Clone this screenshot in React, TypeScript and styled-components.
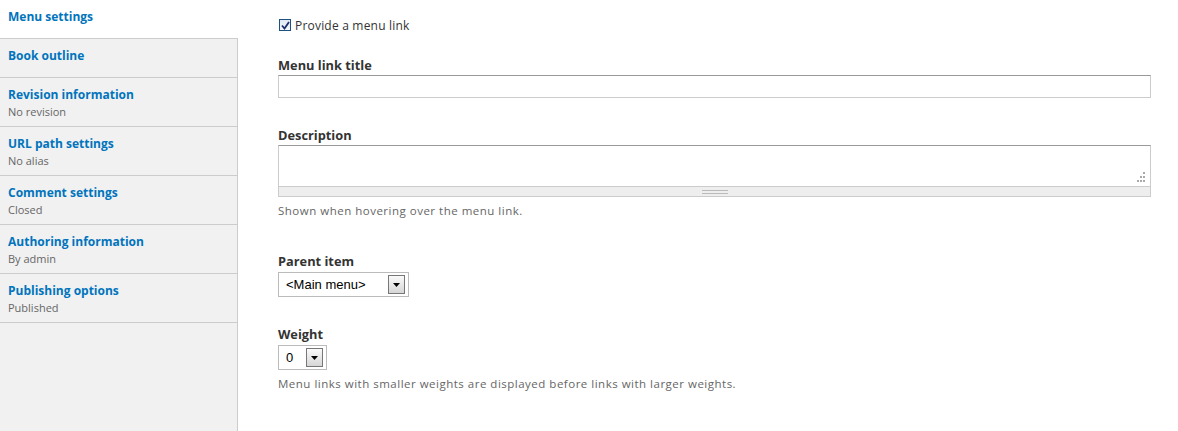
import React from 'react';
import styled, { createGlobalStyle } from 'styled-components';

const GlobalStyle = createGlobalStyle`
  html, body {
    margin: 0;
    padding: 0;
    background: #fff;
  }
  body {
    font-family: "Open Sans", "DejaVu Sans", sans-serif;
    color: #333;
  }
`;

const tabs = [
  { title: 'Menu settings', active: true },
  { title: 'Book outline' },
  { title: 'Revision information', summary: 'No revision' },
  { title: 'URL path settings', summary: 'No alias' },
  { title: 'Comment settings', summary: 'Closed' },
  { title: 'Authoring information', summary: 'By admin' },
  { title: 'Publishing options', summary: 'Published' },
];

const Arrow = () => (
  <svg width="7" height="4" viewBox="0 0 7 4">
    <path d="M0 0 H7 L3.5 4 Z" fill="#000" />
  </svg>
);

const App = () => (
  <>
    <GlobalStyle />
    <Page>
      <Sidebar>
        {tabs.map(t => (
          <Tab key={t.title} active={t.active}>
            <TabTitle>{t.title}</TabTitle>
            {t.summary && <TabSummary>{t.summary}</TabSummary>}
          </Tab>
        ))}
      </Sidebar>
      <Main>
        <CheckRow>
          <CheckBox>
            <svg width="9" height="9" viewBox="0 0 9 9">
              <path d="M1 4.5 L3.5 7.5 L8 1" fill="none" stroke="#1b2f6e" strokeWidth="1.8" />
            </svg>
          </CheckBox>
          <CheckLabel>Provide a menu link</CheckLabel>
        </CheckRow>

        <FormItem mt="25px">
          <Label>Menu link title</Label>
          <TextInput />
        </FormItem>

        <FormItem mt="29px">
          <Label>Description</Label>
          <TextAreaWrap>
            <TextArea>
              <svg width="10" height="10" viewBox="0 0 10 10">
                <rect x="8" y="0" width="2" height="2" fill="#aaa" />
                <rect x="5" y="4" width="2" height="2" fill="#aaa" />
                <rect x="8" y="4" width="2" height="2" fill="#aaa" />
                <rect x="2" y="8" width="2" height="2" fill="#aaa" />
                <rect x="5" y="8" width="2" height="2" fill="#aaa" />
                <rect x="8" y="8" width="2" height="2" fill="#aaa" />
              </svg>
            </TextArea>
            <Grippie>
              <GripLines />
            </Grippie>
          </TextAreaWrap>
          <Help>Shown when hovering over the menu link.</Help>
        </FormItem>

        <FormItem mt="35px">
          <Label>Parent item</Label>
          <Select width="131px">
            <SelectText>&lt;Main menu&gt;</SelectText>
            <SelectButton><Arrow /></SelectButton>
          </Select>
        </FormItem>

        <FormItem mt="29px">
          <Label>Weight</Label>
          <Select width="49px">
            <SelectText>0</SelectText>
            <SelectButton><Arrow /></SelectButton>
          </Select>
          <Help>Menu links with smaller weights are displayed before links with larger weights.</Help>
        </FormItem>
      </Main>
    </Page>
  </>
);

const Page = styled.div`
  display: flex;
  width: 1178px;
  height: 431px;
  overflow: hidden;
`;

const Sidebar = styled.ul`
  list-style: none;
  margin: 0;
  padding: 0;
  width: 238px;
  flex: none;
  box-sizing: border-box;
  background: #f1f1f1;
  border-right: 1px solid #ccc;
`;

const Tab: any = styled.li`
  box-sizing: border-box;
  min-height: 39px;
  padding: 7px 8px 7px;
  border-bottom: 1px solid #ccc;
  background: ${({ active }: any) => active ? '#fff' : 'transparent'};
  margin-right: ${({ active }: any) => active ? '-1px' : '0'};
`;

const TabTitle = styled.div`
  font-size: 12px;
  font-weight: 700;
  line-height: 19px;
  color: #0074bd;
`;

const TabSummary = styled.div`
  font-size: 11px;
  line-height: 15px;
  color: #666;
`;

const Main = styled.div`
  flex: 1;
  padding: 18px 27px 0 40px;
`;

const CheckRow = styled.div`
  display: flex;
  align-items: center;
  height: 14px;
  padding-left: 1px;
`;

const CheckBox = styled.span`
  box-sizing: border-box;
  width: 12px;
  height: 12px;
  border: 1px solid #1c5180;
  background: linear-gradient(#dfe9f5, #f4f8fc);
  display: flex;
  align-items: center;
  justify-content: center;
`;

const CheckLabel = styled.span`
  margin-left: 4px;
  font-size: 12px;
  letter-spacing: 0.2px;
  color: #333;
`;

const FormItem: any = styled.div`
  margin-top: ${({ mt }: any) => mt || '20px'};
`;

const Label = styled.div`
  font-size: 12.8px;
  font-weight: 700;
  line-height: 16px;
  color: #333;
  margin-bottom: 2px;
`;

const TextInput = styled.div`
  box-sizing: border-box;
  height: 23px;
  width: 873px;
  border: 1px solid #ccc;
  border-top-color: #999;
  background: #fff;
`;

const TextAreaWrap = styled.div`
  width: 873px;
`;

const TextArea = styled.div`
  box-sizing: border-box;
  height: 41px;
  border: 1px solid #ccc;
  border-top-color: #999;
  border-bottom: none;
  display: flex;
  align-items: flex-end;
  justify-content: flex-end;
  padding: 0 5px 4px 0;
`;

const Grippie = styled.div`
  box-sizing: border-box;
  height: 11px;
  background: #eee;
  border: 1px solid #ccc;
  display: flex;
  align-items: center;
  justify-content: center;
`;

const GripLines = styled.span`
  width: 26px;
  height: 4px;
  border-top: 1px solid #bbb;
  border-bottom: 1px solid #bbb;
  box-sizing: border-box;
`;

const Help = styled.div`
  font-size: 11.5px;
  letter-spacing: 0.5px;
  line-height: 15px;
  color: #666;
  margin-top: 6px;
`;

const Select: any = styled.div`
  box-sizing: border-box;
  width: ${({ width }: any) => width};
  height: 25px;
  border: 1px solid #bbb;
  background: #fff;
  display: flex;
  align-items: center;
  justify-content: space-between;
  padding: 0 3px 0 7px;
  margin-top: 3px;
`;

const SelectText = styled.span`
  font-family: "Liberation Sans", Arial, sans-serif;
  font-size: 13px;
  color: #000;
`;

const SelectButton = styled.span`
  box-sizing: border-box;
  width: 17px;
  height: 19px;
  border: 1px solid #777;
  background: linear-gradient(#fafafa, #d6d6d6);
  display: flex;
  align-items: center;
  justify-content: center;
`;

export default App;
